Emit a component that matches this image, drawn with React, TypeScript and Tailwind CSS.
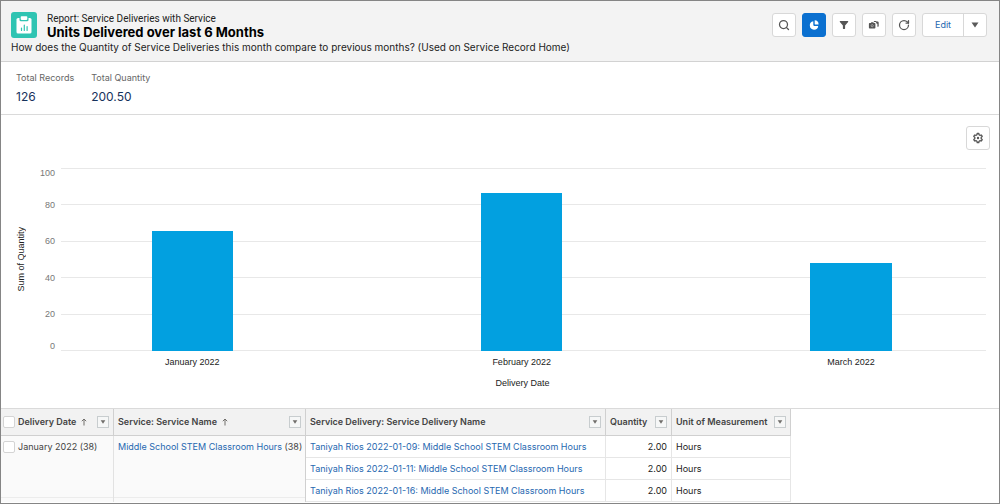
import type { ReactNode } from "react";
import { RotateCw, Search } from "lucide-react";
import clsx from "clsx";

const totals = [
  { label: "Total Records", value: "126" },
  { label: "Total Quantity", value: "200.50" },
];

const ticks = [100, 80, 60, 40, 20, 0];

const bars = [
  { label: "January 2022", value: 65.5 },
  { label: "February 2022", value: 86.5 },
  { label: "March 2022", value: 48 },
];

const deliveries = [
  { name: "Taniyah Rios 2022-01-09: Middle School STEM Classroom Hours", quantity: "2.00", unit: "Hours" },
  { name: "Taniyah Rios 2022-01-11: Middle School STEM Classroom Hours", quantity: "2.00", unit: "Hours" },
  { name: "Taniyah Rios 2022-01-16: Middle School STEM Classroom Hours", quantity: "2.00", unit: "Hours" },
];

function ReportIcon() {
  return (
    <svg viewBox="0 0 26 26" className="size-[26px] shrink-0" aria-hidden>
      <rect width="26" height="26" rx="3" fill="#2fc4b2" />
      <rect x="5.500" y="6" width="15" height="15.500" rx="1.600" fill="#fff" />
      <path d="M8.500 5.500v2.600c0 .7.500 1.200 1.200 1.200h6.600c.7 0 1.200-.5 1.200-1.200V5.500" fill="#2fc4b2" />
      <rect x="9.700" y="4.300" width="6.600" height="3.600" rx=".8" fill="#fff" />
      <path d="M10.500 18.500v-2.500M13.300 18.500v-5.500M16.100 18.500v-4" stroke="#2fc4b2" strokeWidth="1.200" strokeLinecap="round" />
    </svg>
  );
}

function PieIcon() {
  return (
    <svg viewBox="0 0 12 12" className="size-3" fill="currentColor" aria-hidden>
      <path d="M5.300 2.300a4.200 4.200 0 1 0 4.900 4.600H6.100a.8.8 0 0 1-.8-.8z" />
      <path d="M6.700 1.200v3.900c0 .2.100.3.300.3h3.600A4.200 4.200 0 0 0 6.700 1.200z" />
    </svg>
  );
}

function FilterIcon() {
  return (
    <svg viewBox="0 0 12 12" className="size-3" fill="currentColor" aria-hidden>
      <path d="M2.300 2h7.400c.5 0 .7.500.4.900L7.100 6.400v3.200c0 .3-.2.500-.4.500H5.300c-.2 0-.4-.2-.4-.5V6.400L1.900 2.900c-.3-.4-.1-.9.400-.9z" />
    </svg>
  );
}

function SnapshotIcon() {
  return (
    <svg viewBox="0 0 12 12" className="size-3" fill="currentColor" aria-hidden>
      <path d="M2.800 4l.5-.7h2l.5.7h.8c.5 0 .8.300.8.800v3.900c0 .5-.3.800-.8.800H1.700c-.5 0-.8-.3-.8-.8V4.800c0-.5.3-.8.8-.8z" />
      <circle cx="4.200" cy="6.700" r="1.100" fill="none" stroke="#ffffff" strokeWidth=".4" />
      <path d="M5.700 2.500l.4-.5h2l.4.500h.9c.7 0 1.300.5 1.300 1.200v3.600c0 .3-.3.500-.6.500h-.7V5.300c0-.6-.3-.9-.8-.9h-.3c0-.9-.5-1.300-1.300-1.300H6.100z" />
    </svg>
  );
}

function GearIcon() {
  return (
    <svg viewBox="0 0 12 12" className="size-3" fill="none" stroke="currentColor" aria-hidden>
      <path
        strokeWidth="1.300"
        strokeLinejoin="round"
        d="M5.200 1.500h1.600l.3 1.300 1 .6 1.300-.4.800 1.400-1 .9v1.400l1 .9-.8 1.400-1.300-.4-1 .6-.3 1.300H5.200l-.3-1.300-1-.6-1.300.4-.8-1.400 1-.9V5.300l-1-.9.800-1.400 1.300.4 1-.6z"
      />
      <circle cx="6" cy="6" r="1.200" fill="currentColor" stroke="none" />
    </svg>
  );
}

function Caret({ className }: { className: string }) {
  return (
    <svg viewBox="0 0 8 6" className={className} fill="currentColor" aria-hidden>
      <path d="M.5.500h7L4 5.500z" />
    </svg>
  );
}

function SortArrow() {
  return (
    <svg viewBox="0 0 6 8" className="ml-0.5 h-2 w-1.5 shrink-0" fill="none" stroke="#706e6b" aria-hidden>
      <path d="M3 7.500V1M.8 3.200L3 1l2.200 2.200" />
    </svg>
  );
}

function IconButton({ label, active, children }: { label: string; active?: boolean; children: ReactNode }) {
  return (
    <button
      type="button"
      aria-label={label}
      aria-pressed={active}
      className={clsx(
        "flex size-6 items-center justify-center rounded-[3px] border",
        active ? "border-[#0b70d0] bg-[#0b70d0] text-white" : "border-[#d8d8d8] bg-white text-[#555555]",
      )}
    >
      {children}
    </button>
  );
}

function Check({ label }: { label: string }) {
  return (
    <input
      type="checkbox"
      aria-label={label}
      className="size-3 shrink-0 appearance-none rounded-xs border border-[#d4d4d4] bg-white"
    />
  );
}

function HeaderCell({ title, sorted, checkbox }: { title: string; sorted?: boolean; checkbox?: boolean }) {
  return (
    <th
      scope="col"
      className={clsx("border-r border-b border-[#d0d0d0] py-0 pr-1 font-semibold", checkbox ? "pl-0.5" : "pl-1")}
    >
      <div className="flex items-center gap-[3px]">
        {checkbox && <Check label="Select all rows" />}
        <span>{title}</span>
        {sorted && <SortArrow />}
        <button
          type="button"
          aria-label={`${title} actions`}
          className="ml-auto flex size-3 shrink-0 items-center justify-center border border-[#c8cdcf] bg-[#f6f7f7] text-[#706e6b]"
        >
          <Caret className="h-1 w-1.5" />
        </button>
      </div>
    </th>
  );
}

function ReportHeader() {
  return (
    <header className="flex items-start justify-between border-b border-[#d2d2d2] bg-[#f3f3f3] pt-2.5 pr-3 pb-2 pl-2.5">
      <div>
        <div className="flex items-center gap-2.5">
          <ReportIcon />
          <div className="pt-0.5">
            <p className="font-[Roboto,sans-serif] text-[10px] leading-3">Report: Service Deliveries with Service</p>
            <h1 className="text-[13px] leading-[14px] font-bold text-black">Units Delivered over last 6 Months</h1>
          </div>
        </div>
        <p className="mt-0.5 text-[10px] leading-3">
          How does the Quantity of Service Deliveries this month compare to previous months? (Used on Service Record
          Home)
        </p>
      </div>
      <div className="flex gap-1.5 pt-0.5">
        <IconButton label="Search report">
          <Search className="size-3" strokeWidth={2.5} />
        </IconButton>
        <IconButton label="Toggle chart" active>
          <PieIcon />
        </IconButton>
        <IconButton label="Filters">
          <FilterIcon />
        </IconButton>
        <IconButton label="Snapshots">
          <SnapshotIcon />
        </IconButton>
        <IconButton label="Refresh">
          <RotateCw className="size-3" strokeWidth={2.5} />
        </IconButton>
        <div className="flex h-6 rounded-[3px] border border-[#d8d8d8] bg-white">
          <button type="button" className="w-10 text-[9px] text-[#1f68b0]">
            Edit
          </button>
          <button
            type="button"
            aria-label="More actions"
            className="flex w-[23px] items-center justify-center border-l border-[#d8d8d8] text-[#5a5a5a]"
          >
            <Caret className="h-1.5 w-2" />
          </button>
        </div>
      </div>
    </header>
  );
}

function Chart() {
  return (
    <section
      aria-label="Sum of Quantity by Delivery Date"
      className="pt-[11px] pr-[9px] pb-[19px] font-['Liberation_Sans',Arial,sans-serif] text-[9px]"
    >
      <div className="flex justify-end">
        <IconButton label="Chart settings">
          <GearIcon />
        </IconButton>
      </div>
      <div className="mt-[18px] flex pr-1">
        <div className="flex w-8 items-center pl-3.5">
          <span className="rotate-180 leading-3 [writing-mode:vertical-rl]">Sum of Quantity</span>
        </div>
        <div className="flex w-[22px] flex-col text-right leading-[10px] text-[#777777]">
          {ticks.map((tick, i) => (
            <div
              key={tick}
              className={clsx(
                "flex basis-0 justify-end",
                i === 0 && "grow items-start",
                i > 0 && i < ticks.length - 1 && "grow-2 items-center",
                i === ticks.length - 1 && "grow items-end",
              )}
            >
              {tick}
            </div>
          ))}
        </div>
        <div className="ml-1.5 grid h-[183px] flex-1">
          <div className="col-start-1 row-start-1 flex flex-col justify-between">
            {ticks.map((tick) => (
              <div key={tick} className="h-px bg-[#e8e8e8]" />
            ))}
          </div>
          <div className="col-start-1 row-start-1 flex items-end justify-between pr-[10.2%] pl-[9.8%]">
            {bars.map((bar) => (
              <div key={bar.label} className="w-[11%] bg-[#02a0e0]" style={{ height: `${bar.value}%` }} />
            ))}
          </div>
        </div>
      </div>
      <div className="flex pr-1 pl-[60px] text-center leading-3">
        <div className="flex flex-1 justify-between pt-[5px] pr-[10.2%] pl-[9.8%]">
          {bars.map((bar) => (
            <div key={bar.label} className="flex w-[11%] justify-center whitespace-nowrap">
              {bar.label}
            </div>
          ))}
        </div>
      </div>
      <p className="mt-[9px] pr-1.5 pl-[60px] text-center leading-3">Delivery Date</p>
    </section>
  );
}

function DeliveryTable() {
  return (
    <section className="flex-1 border-t border-[#dadada]">
      <table className="w-[790px] table-fixed border-separate border-spacing-0 text-left text-[9px] leading-3 text-[#444444]">
        <colgroup>
          <col className="w-[113px]" />
          <col className="w-[192px]" />
          <col className="w-[300px]" />
          <col className="w-[66px]" />
          <col />
        </colgroup>
        <thead className="bg-[#f2f2f2] whitespace-nowrap">
          <tr className="h-[27px]">
            <HeaderCell title="Delivery Date" sorted checkbox />
            <HeaderCell title="Service: Service Name" sorted />
            <HeaderCell title="Service Delivery: Service Delivery Name" />
            <HeaderCell title="Quantity" />
            <HeaderCell title="Unit of Measurement" />
          </tr>
        </thead>
        <tbody className="whitespace-nowrap">
          {deliveries.map((row, i) => (
            <tr key={row.name} className="h-[22px]">
              {i === 0 && (
                <>
                  <td rowSpan={3} className="border-r border-[#e2e2e2] bg-[#fafafa] p-0 align-top">
                    <div className="flex h-[62px] items-start gap-[3px] border-b border-[#ececec] pt-[5px] pl-0.5">
                      <Check label="Select January 2022" />
                      January 2022 (38)
                    </div>
                  </td>
                  <td rowSpan={3} className="border-r border-[#d0d0d0] bg-[#fafafa] p-0 align-top">
                    <div className="h-[62px] border-b border-[#ececec] pt-[5px] pl-1">
                      <a href="#service" className="text-[#1f68b0]">
                        Middle School STEM Classroom Hours
                      </a>{" "}
                      (38)
                    </div>
                  </td>
                </>
              )}
              <td className="border-r border-b border-[#e6e6e6] py-0 pr-1 pl-1">
                <a href={`#delivery-${i + 1}`} className="text-[#1f68b0]">
                  {row.name}
                </a>
              </td>
              <td className="border-r border-b border-[#e6e6e6] py-0 pr-1 pl-1 text-right text-[#222222]">
                {row.quantity}
              </td>
              <td className="border-r border-b border-[#e6e6e6] py-0 pr-1 pl-1 text-[#222222]">{row.unit}</td>
            </tr>
          ))}
        </tbody>
      </table>
    </section>
  );
}

export default function App() {
  return (
    <main className="flex min-h-screen flex-col border border-[#858585] bg-white font-[Inter,'Liberation_Sans',sans-serif] text-[#222222]">
      <ReportHeader />
      <dl className="flex gap-[17px] border-b border-[#dadada] px-[15px] pt-2.5 pb-[9px]">
        {totals.map((total) => (
          <div key={total.label}>
            <dt className="text-[9px] leading-3 text-[#666666]">{total.label}</dt>
            <dd className="mt-[5px] text-[12px] leading-4 text-[#16325c]">{total.value}</dd>
          </div>
        ))}
      </dl>
      <Chart />
      <DeliveryTable />
    </main>
  );
}
